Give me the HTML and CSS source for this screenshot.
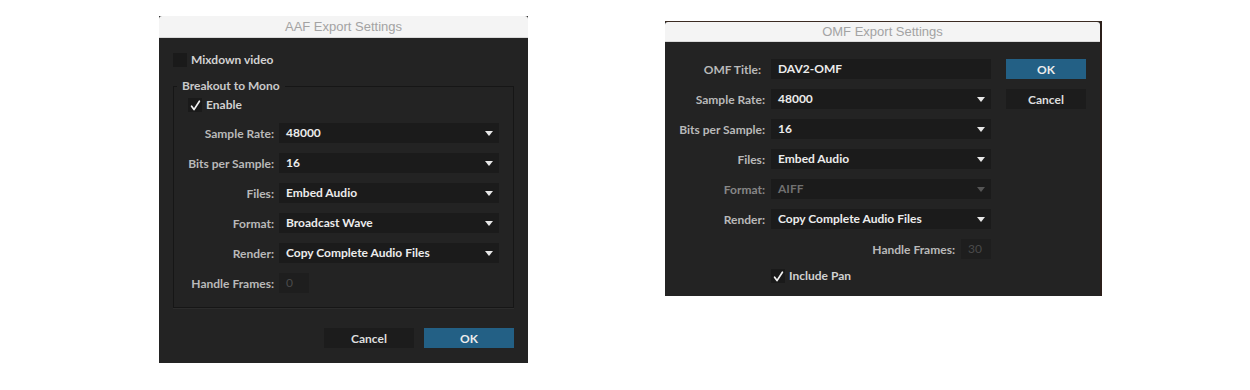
FILE: index.html
```html
<!DOCTYPE html>
<html lang="en">
<head>
    <meta charset="UTF-8">
    <title>Export Settings</title>
    <link rel="stylesheet" href="styles.css">
</head>
<body>

<div class="stage">

    <!-- AAF dialog -->
    <div class="dialog aaf">
        <div class="titlebar">AAF Export Settings</div>
        <div class="body">
            <label class="check">
                <span class="box"></span>Mixdown video
            </label>

            <fieldset class="group">
                <legend>Breakout to Mono</legend>
                <label class="check">
                    <span class="box"><svg width="13" height="13" viewBox="0 0 13 13"><path d="M2.6 7.2 L5 10.6 L10.4 2.2" fill="none" stroke="#f2f2f2" stroke-width="1.7" stroke-linecap="round" stroke-linejoin="round"/></svg></span>Enable
                </label>
                <div class="form">
                    <span class="lbl">Sample Rate:</span>
                    <div class="select">48000</div>
                    <span class="lbl">Bits per Sample:</span>
                    <div class="select">16</div>
                    <span class="lbl">Files:</span>
                    <div class="select">Embed Audio</div>
                    <span class="lbl">Format:</span>
                    <div class="select">Broadcast Wave</div>
                    <span class="lbl">Render:</span>
                    <div class="select">Copy Complete Audio Files</div>
                    <span class="lbl">Handle Frames:</span>
                    <div class="field small disabled">0</div>
                </div>
            </fieldset>

            <div class="actions">
                <button class="btn">Cancel</button>
                <button class="btn primary">OK</button>
            </div>
        </div>
    </div>

    <!-- OMF dialog -->
    <div class="dialog omf">
        <div class="titlebar">OMF Export Settings</div>
        <div class="body">
            <div class="form wide">
                <span class="lbl title-lbl">OMF Title:</span>
                <div class="field">DAV2-OMF</div>
                <span class="lbl">Sample Rate:</span>
                <div class="select">48000</div>
                <span class="lbl">Bits per Sample:</span>
                <div class="select">16</div>
                <span class="lbl">Files:</span>
                <div class="select">Embed Audio</div>
                <span class="lbl disabled">Format:</span>
                <div class="select disabled">AIFF</div>
                <span class="lbl">Render:</span>
                <div class="select">Copy Complete Audio Files</div>
                <div class="handle">
                    <span class="lbl">Handle Frames:</span>
                    <div class="field small disabled">30</div>
                </div>
                <label class="check pan">
                    <span class="box"><svg width="13" height="13" viewBox="0 0 13 13"><path d="M2.6 7.2 L5 10.6 L10.4 2.2" fill="none" stroke="#f2f2f2" stroke-width="1.7" stroke-linecap="round" stroke-linejoin="round"/></svg></span>Include Pan
                </label>
            </div>
            <div class="side">
                <button class="btn primary">OK</button>
                <button class="btn">Cancel</button>
            </div>
        </div>
    </div>

</div>

</body>
</html>
```

FILE: styles.css
```css
body {
    margin: 0;
    background: #fff;
    font-family: 'Lato', 'Liberation Sans', sans-serif;
    font-size: 12px;
    font-weight: 700;
    color: #e4e4e4;
}
.stage {
    display: flex;
    align-items: flex-start;
    padding: 16px 0 0 159px;
}
.dialog {
    background: #232323;
    display: flex;
    flex-direction: column;
}
.aaf {
    width: 369px;
    height: 347px;
}
.omf {
    width: 435px;
    height: 274px;
    margin: 5px 0 0 137px;
    border-top: 1px solid #3b2b22;
    border-right: 2px solid #2b1f1a;
}
.titlebar {
    height: 21px;
    line-height: 21px;
    background: #f4f4f4;
    border-bottom: 1px solid #d9d9d9;
    border-radius: 3px 3px 0 0;
    text-align: center;
    font-family: 'Liberation Sans', sans-serif;
    font-weight: 400;
    font-size: 13px;
    color: #a3a3a3;
}
.omf .titlebar {
    height: 19px;
    line-height: 20px;
}

/* checkboxes */
.check {
    display: flex;
    align-items: center;
    gap: 4px;
    height: 14px;
    line-height: 14px;
    color: #d2d2d2;
}
.box {
    width: 14px;
    height: 14px;
    background: #1a1a1a;
    display: flex;
    align-items: center;
    justify-content: center;
}

/* AAF body */
.aaf .body {
    padding: 15px 14px 15px;
}
.group {
    margin: 12px 0 0;
    padding: 5px 14px 14px;
    border: 1px solid #161616;
    box-shadow: 0 1px 0 #2c2c2c;
    min-inline-size: 0;
}
.group legend {
    margin-left: -11px;
    padding: 0 5px;
    line-height: 14px;
    color: #c9c9c9;
}
.group .form {
    margin-top: 11px;
}
.form {
    display: grid;
    grid-template-columns: 86px 220px;
    column-gap: 5px;
    row-gap: 10px;
    align-items: center;
}
.lbl {
    text-align: right;
    color: #b9b9b9;
    white-space: nowrap;
}
.lbl.disabled {
    color: #878787;
}
.title-lbl {
    padding-right: 4px;
}
.select, .field {
    height: 20px;
    line-height: 20px;
    background: #1b1b1b;
    padding: 0 6px 0 7px;
    color: #ececec;
    white-space: nowrap;
}
.select {
    display: flex;
    justify-content: space-between;
    align-items: center;
}
.select::after {
    content: "";
    border-left: 4.5px solid transparent;
    border-right: 4.5px solid transparent;
    border-top: 5px solid #e8e8e8;
}
.select.disabled {
    color: #707070;
}
.select.disabled::after {
    border-top-color: #555;
}
.field.small {
    width: 17px;
    background: #1e1e1e;
}
.field.disabled {
    color: #4a4a4a;
    font-weight: 400;
}

.actions {
    display: flex;
    justify-content: flex-end;
    gap: 10px;
    margin-top: 20px;
}
.btn {
    width: 90px;
    height: 20px;
    padding: 0;
    border: none;
    background: #1c1c1c;
    font: inherit;
    color: #dedede;
}
.btn.primary {
    background: #236085;
    color: #ececec;
}

/* OMF body */
.omf .body {
    display: flex;
    gap: 15px;
    padding: 17px 15px 0 0;
}
.form.wide {
    grid-template-columns: 100px 220px;
    column-gap: 6px;
}
.handle {
    grid-column: 1 / 3;
    display: flex;
    justify-content: flex-end;
    align-items: center;
    gap: 6px;
}
.pan {
    grid-column: 2;
}
.side {
    display: flex;
    flex-direction: column;
    gap: 10px;
}
.side .btn {
    width: 80px;
}
```
